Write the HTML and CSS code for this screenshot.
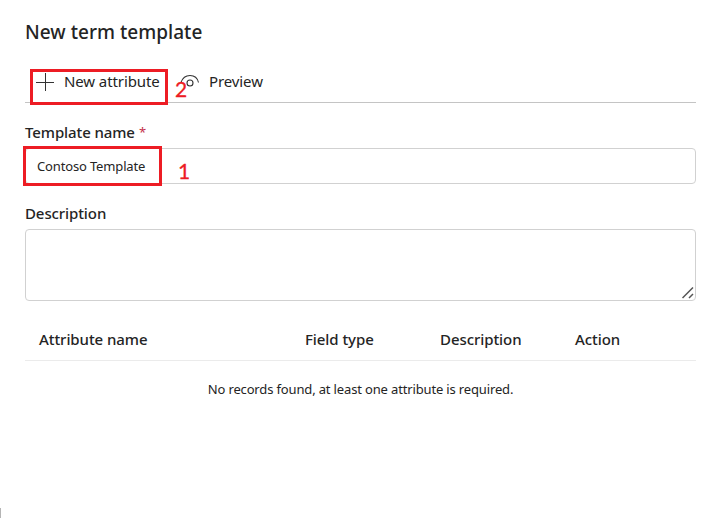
FILE: index.html
```html
<!DOCTYPE html>
<html lang="en">
<head>
<meta charset="utf-8">
<title>New term template</title>
<link rel="stylesheet" href="styles.css">
</head>
<body>
<main class="panel">
  <h1 class="title"><span>New term template</span></h1>
  <div class="toolbar">
    <button class="command command-new">
      <svg class="icon-plus" width="18" height="18" viewBox="0 0 18 18"><path d="M9.500 0v18M0 9.500h18" fill="none" stroke="#333" stroke-width="1"/></svg>
      <span>New attribute</span>
    </button>
    <button class="command command-preview">
      <svg class="icon-eye" width="20" height="14" viewBox="0 0 20 14"><path d="M1 8.500C2.500 4 6 1.500 10 1.500S17.500 4 18.500 8.500" fill="none" stroke="#333" stroke-width="1.100"/><circle cx="10" cy="9" r="3" fill="none" stroke="#333" stroke-width="1.100"/></svg>
      <span>Preview</span>
    </button>
    <span class="mark mark-new"></span>
    <span class="step step-two">2</span>
  </div>
  <div class="field">
    <label class="label"><span>Template name</span> <span class="required">*</span></label>
    <div class="input"><span>Contoso Template</span></div>
    <span class="mark mark-name"></span>
    <span class="step step-one">1</span>
  </div>
  <div class="field">
    <label class="label"><span>Description</span></label>
    <div class="textarea">
      <svg class="grip" width="12" height="12" viewBox="0 0 12 12"><path d="M0.500 11L11 0.500M7 11l4-4" fill="none" stroke="#555" stroke-width="1.500"/></svg>
    </div>
  </div>
  <div class="table">
    <div class="head">
      <span>Attribute name</span><span>Field type</span><span>Description</span><span>Action</span>
    </div>
    <p class="empty"><span>No records found, at least one attribute is required.</span></p>
  </div>
</main>
<span class="edge"></span>
</body>
</html>
```
FILE: styles.css
```css
* { box-sizing: border-box; }
body {
  margin: 0;
  height: 518px;
  overflow: hidden;
  background: #fff;
  color: #242424;
  font-family: "Noto Sans", "Open Sans", sans-serif;
}
.panel { padding: 18px 18px 0 25px; }
.title {
  margin: 0;
  height: 28px;
  font-size: 19px;
  line-height: 28px;
  font-weight: 500;
  letter-spacing: 0.03px;
}
.toolbar {
  position: relative;
  display: flex;
  height: 57px;
  padding-top: 22px;
  border-bottom: 1px solid #c4c4c4;
}
.command {
  display: flex;
  height: 28px;
  padding: 0;
  border: 0;
  background: none;
  color: inherit;
  font: 400 15px/26px "Noto Sans", sans-serif;
  letter-spacing: -0.1px;
}
.command-new { margin-left: 11px; width: 144px; }
.icon-plus { flex: none; margin: 5px 10px 0 0; }
.icon-eye { flex: none; margin: 6px 9px 0 0; }
.mark { position: absolute; border: 3px solid #ed1c24; }
.mark-new { left: 5px; top: 23px; width: 138px; height: 36px; }
.mark-name { left: -2px; top: 43px; width: 139px; height: 40px; }
.step {
  position: absolute;
  color: #ed1c24;
  font: 400 21px/24px Lato, sans-serif;
  -webkit-text-stroke: 0.3px #ed1c24;
}
.step-two { left: 150px; top: 31px; }
.step-one { left: 153px; top: 56px; }
.field { position: relative; height: 81px; padding-top: 17px; }
.label {
  display: flex;
  height: 28px;
  font-size: 15px;
  line-height: 24px;
  font-weight: 500;
  letter-spacing: -0.1px;
}
.required { margin-left: 4px; color: #c4314b; font-size: 13px; font-weight: 400; }
.input {
  height: 36px;
  padding: 0 11px;
  border: 1px solid #d1d1d1;
  border-radius: 4px;
  font-size: 13px;
  line-height: 35px;
  letter-spacing: -0.15px;
}
.textarea {
  display: flex;
  justify-content: flex-end;
  align-items: flex-end;
  height: 72px;
  padding: 1px;
  border: 1px solid #d1d1d1;
  border-radius: 4px;
}
.table { padding-top: 53px; margin-top: 0; }
.head {
  display: grid;
  grid-template-columns: 266px 135px 135px 1fr;
  height: 43px;
  padding-left: 14px;
  border-bottom: 1px solid #ebebeb;
  font-size: 15px;
  line-height: 43px;
  font-weight: 500;
  letter-spacing: -0.07px;
}
.empty {
  margin: 0;
  padding-top: 15px;
  text-align: center;
  font-size: 13px;
  line-height: 26px;
  letter-spacing: -0.15px;
}
.edge { position: absolute; left: 0; top: 508px; width: 1px; height: 10px; background: #b5b5b5; }
```
